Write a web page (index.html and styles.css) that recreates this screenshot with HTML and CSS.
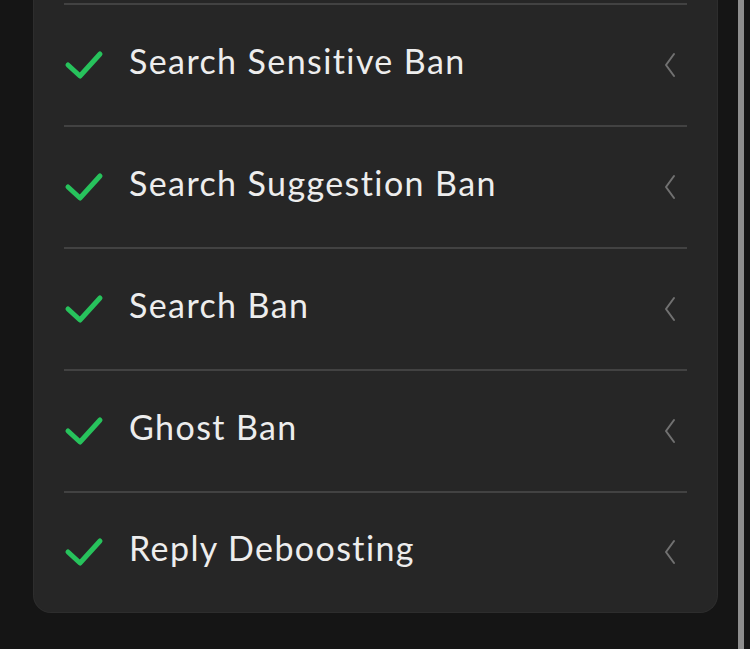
FILE: index.html
```html
<!DOCTYPE html>
<html>

<head>
  <meta charset="utf-8">
  <title>Ban check</title>
  <link rel="stylesheet" href="styles.css">
</head>

<body>
  <div class="page">
    <div class="card">
      <div class="row">
        <svg class="check" width="40" height="30" viewBox="0 0 40 30"><polyline points="4,15 16,26 36,4" /></svg>
        <span class="label">Search Sensitive Ban</span>
        <svg class="chevron" width="14" height="26" viewBox="0 0 14 26"><polyline points="10,2 2,13 10,24" /></svg>
      </div>
      <div class="row">
        <svg class="check" width="40" height="30" viewBox="0 0 40 30"><polyline points="4,15 16,26 36,4" /></svg>
        <span class="label">Search Suggestion Ban</span>
        <svg class="chevron" width="14" height="26" viewBox="0 0 14 26"><polyline points="10,2 2,13 10,24" /></svg>
      </div>
      <div class="row">
        <svg class="check" width="40" height="30" viewBox="0 0 40 30"><polyline points="4,15 16,26 36,4" /></svg>
        <span class="label">Search Ban</span>
        <svg class="chevron" width="14" height="26" viewBox="0 0 14 26"><polyline points="10,2 2,13 10,24" /></svg>
      </div>
      <div class="row">
        <svg class="check" width="40" height="30" viewBox="0 0 40 30"><polyline points="4,15 16,26 36,4" /></svg>
        <span class="label">Ghost Ban</span>
        <svg class="chevron" width="14" height="26" viewBox="0 0 14 26"><polyline points="10,2 2,13 10,24" /></svg>
      </div>
      <div class="row">
        <svg class="check" width="40" height="30" viewBox="0 0 40 30"><polyline points="4,15 16,26 36,4" /></svg>
        <span class="label">Reply Deboosting</span>
        <svg class="chevron" width="14" height="26" viewBox="0 0 14 26"><polyline points="10,2 2,13 10,24" /></svg>
      </div>
    </div>
  </div>
  <div class="scrollbar"></div>
</body>

</html>
```

FILE: styles.css
```css
body {
  margin: 0;
  height: 649px;
  overflow: hidden;
  background: #151515;
  display: flex;
  font-family: Lato, "Noto Sans", sans-serif;
}

.page {
  flex: 1;
  padding: 0 20px 0 33px;
}

.card {
  background: #262626;
  border: 1px solid #2d2d2d;
  border-top: none;
  border-radius: 0 0 18px 18px;
  padding: 3px 30px 0 30px;
}

.row {
  height: 120px;
  border-top: 2px solid #424242;
  display: flex;
  align-items: center;
}

.row:last-child {
  height: 118px;
  padding-bottom: 1px;
}

.check polyline {
  fill: none;
  stroke: #27c25c;
  stroke-width: 5;
  stroke-linecap: round;
  stroke-linejoin: round;
}

.label {
  flex: 1;
  margin-left: 25px;
  padding-bottom: 9px;
  color: #ededed;
  font-size: 34px;
  letter-spacing: 1.4px;
}

.chevron {
  margin-right: 9px;
}

.chevron polyline {
  fill: none;
  stroke: #717171;
  stroke-width: 2;
  stroke-linecap: round;
  stroke-linejoin: round;
}

.scrollbar {
  width: 6px;
  height: 649px;
  background: #8e8e8e;
  margin-right: 6px;
}
```
